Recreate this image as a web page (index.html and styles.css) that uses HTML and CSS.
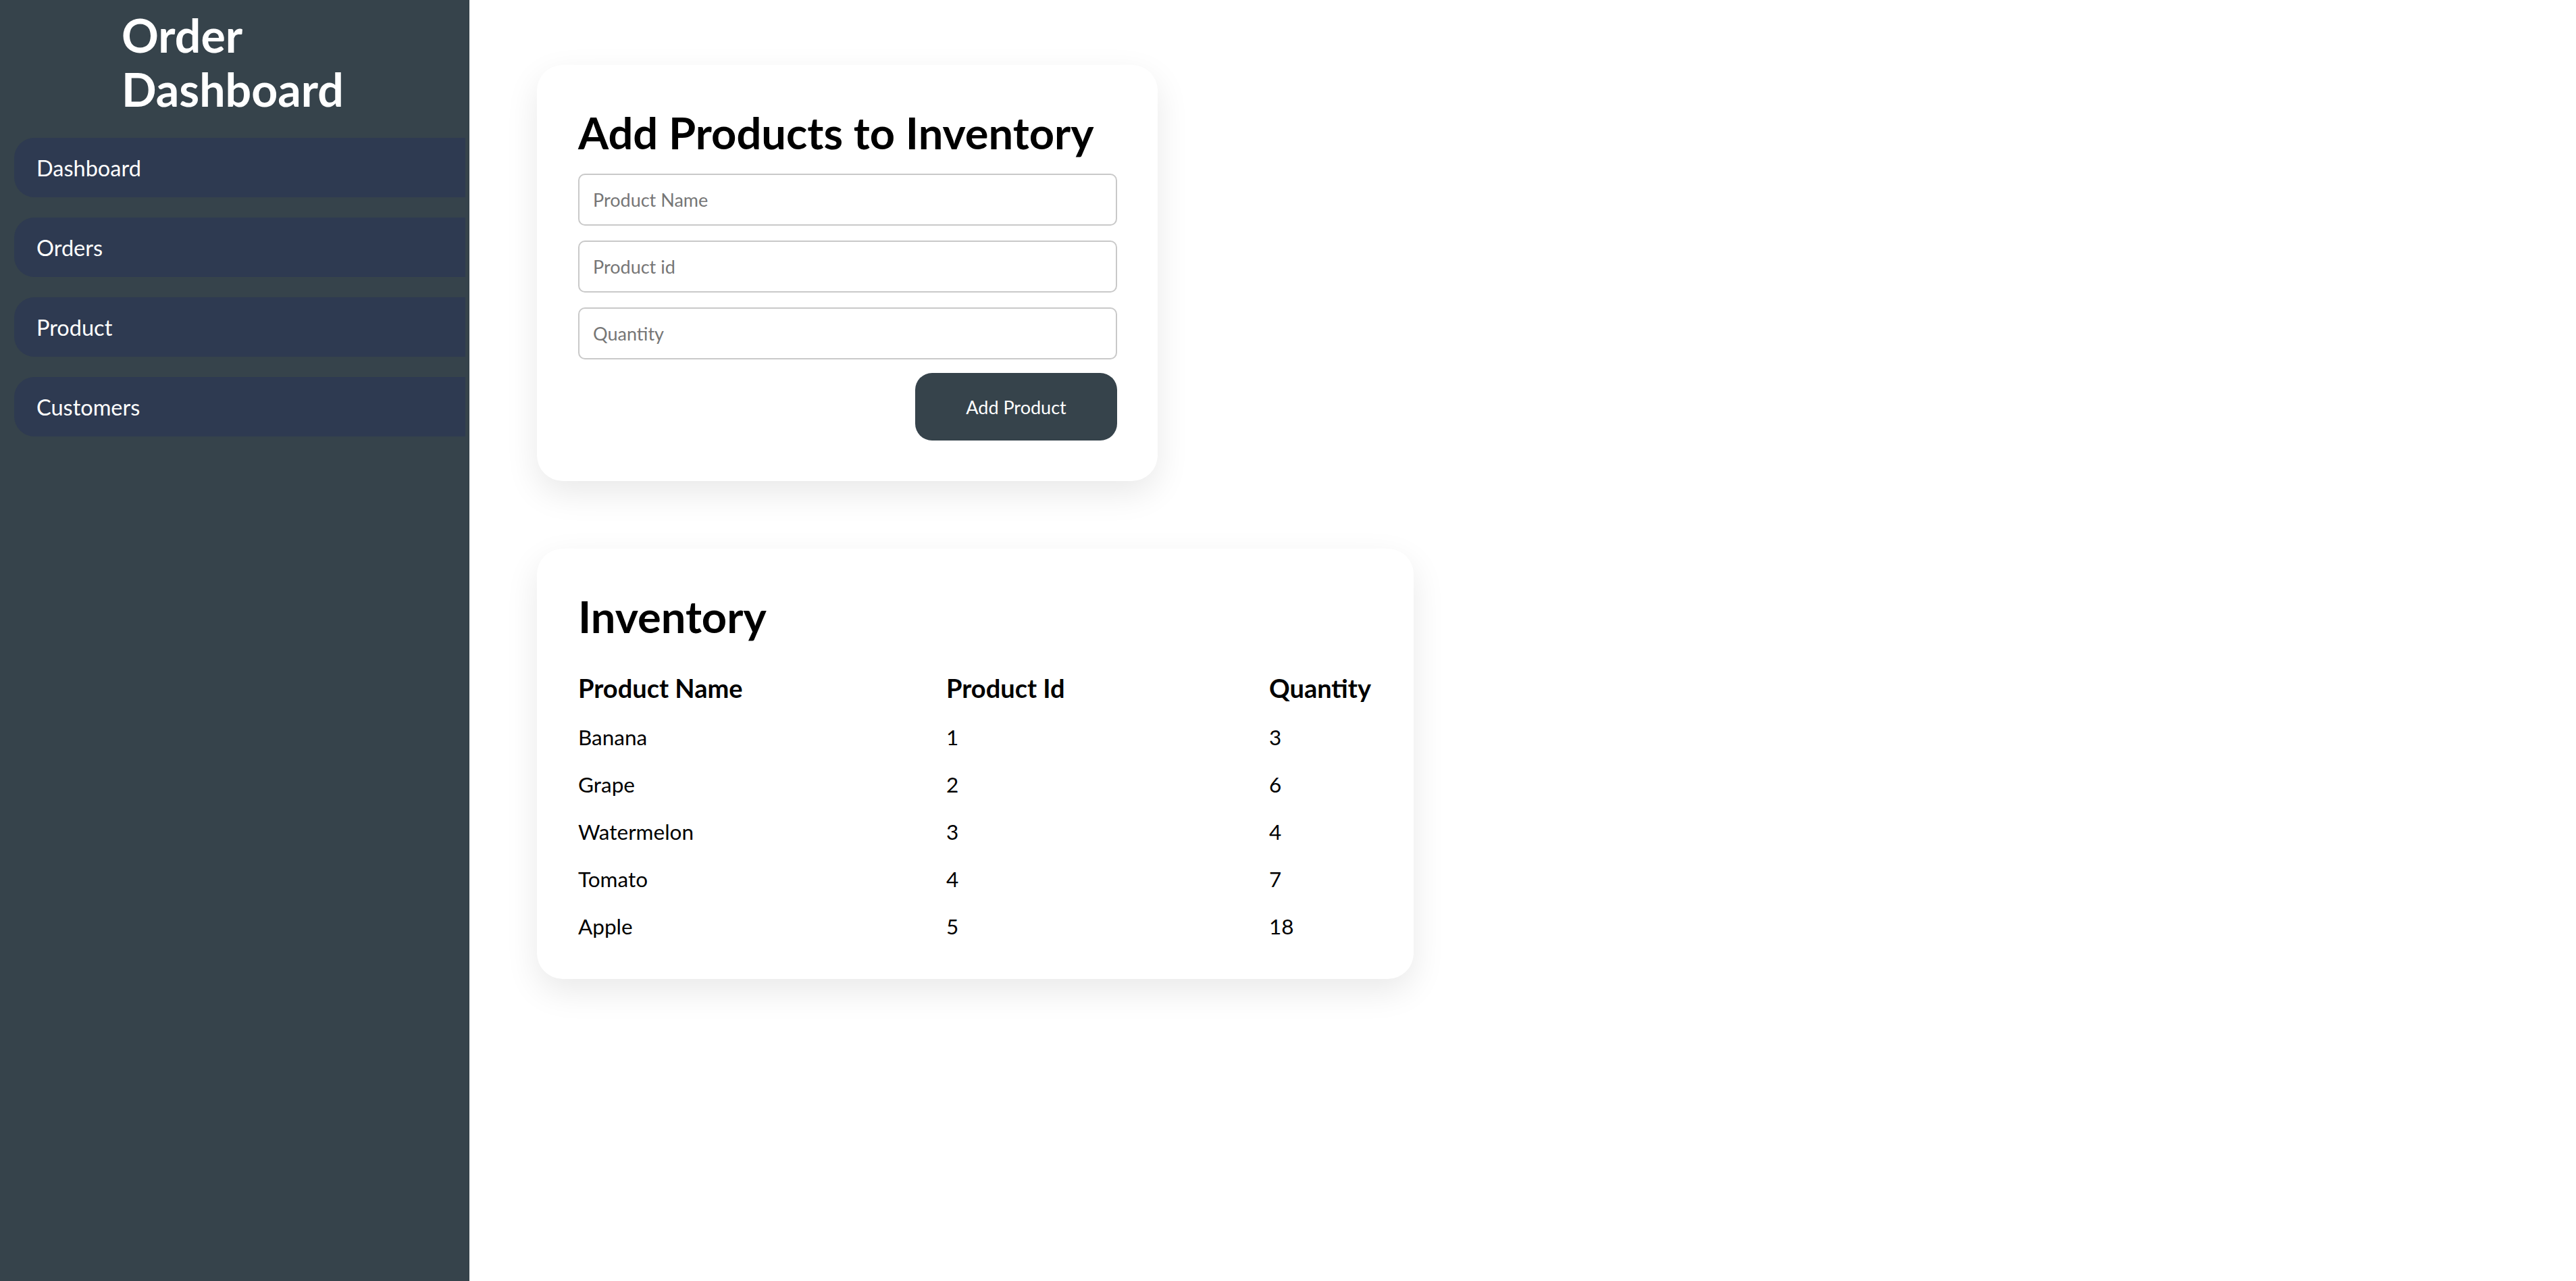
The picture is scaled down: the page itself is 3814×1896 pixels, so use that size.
FILE: index.html
```html
<!DOCTYPE html>
<html lang="en">
<head>
<meta charset="utf-8">
<title>Order Dashboard</title>
<link rel="stylesheet" href="styles.css">
</head>
<body>
<div class="layout">
  <aside class="sidebar">
    <h1 class="brand">Order Dashboard</h1>
    <nav class="nav">
      <a class="nav-item" href="#">Dashboard</a>
      <a class="nav-item" href="#">Orders</a>
      <a class="nav-item" href="#">Product</a>
      <a class="nav-item" href="#">Customers</a>
    </nav>
  </aside>
  <main class="main">
    <section class="card card-form">
      <h2 class="card-title">Add Products to Inventory</h2>
      <form class="form">
        <input class="field" type="text" placeholder="Product Name">
        <input class="field" type="text" placeholder="Product id">
        <input class="field" type="text" placeholder="Quantity">
        <div class="actions">
          <button class="btn" type="button">Add Product</button>
        </div>
      </form>
    </section>
    <section class="card card-table">
      <h2 class="card-title">Inventory</h2>
      <table class="table">
        <thead>
          <tr><th class="c1">Product Name</th><th class="c2">Product Id</th><th class="c3">Quantity</th></tr>
        </thead>
        <tbody>
          <tr><td>Banana</td><td>1</td><td>3</td></tr>
          <tr><td>Grape</td><td>2</td><td>6</td></tr>
          <tr><td>Watermelon</td><td>3</td><td>4</td></tr>
          <tr><td>Tomato</td><td>4</td><td>7</td></tr>
          <tr><td>Apple</td><td>5</td><td>18</td></tr>
        </tbody>
      </table>
    </section>
  </main>
</div>
</body>
</html>
```
FILE: styles.css
```css
* { box-sizing: border-box; }
html, body { margin: 0; padding: 0; }
body {
  font-family: Lato, "Noto Sans", sans-serif;
  background: #ffffff;
  color: #000;
}
.layout {
  display: flex;
  min-height: 1896px;
}
.sidebar {
  width: 695px;
  flex-shrink: 0;
  background: #36434b;
  overflow: hidden;
}
.brand {
  margin: 0;
  padding-left: 180px;
  max-width: 560px;
  color: #fff;
  font-size: 68px;
  line-height: 80px;
  font-weight: 700;
  padding-top: 12px;
  padding-bottom: 32px;
}
.nav {
  display: flex;
  flex-direction: column;
  gap: 30px;
  padding-left: 21px;
  padding-right: 6px;
}
.nav-item {
  display: flex;
  align-items: center;
  height: 88px;
  padding-left: 33px;
  background: #2e3a51;
  border-radius: 30px 0 0 30px;
  color: #fff;
  text-decoration: none;
  font-size: 32.5px;
}
.main {
  padding: 96px 0 0 100px;
  display: flex;
  flex-direction: column;
  align-items: flex-start;
  gap: 100px;
}
.card {
  background: #fff;
  border-radius: 38px;
  box-shadow: 0 18px 50px rgba(0,0,0,0.09);
}
.card-form {
  width: 919px;
  padding: 0 60px 60px 61px;
}
.card-title {
  margin: 0;
  font-size: 65px;
  font-weight: 700;
  line-height: 77px;
}
.card-form .card-title {
  padding-top: 62px;
  padding-bottom: 22px;
}
.form {
  display: flex;
  flex-direction: column;
  gap: 22px;
}
.field {
  width: 798px;
  height: 77px;
  border: 2px solid #c9c9c9;
  border-radius: 10px;
  padding: 0 20px;
  font-family: inherit;
  font-size: 27px;
  color: #000;
  outline: none;
}
.field::placeholder { color: #767676; }
.actions {
  display: flex;
  justify-content: flex-end;
  margin-top: -2px;
}
.btn {
  width: 299px;
  height: 100px;
  border: none;
  border-radius: 25px;
  background: #36434b;
  color: #fff;
  font-family: inherit;
  font-size: 27px;
}
.card-table {
  width: 1298px;
  padding: 62px 60px 43px 61px;
}
.card-table .card-title {
  padding-top: 0;
  padding-bottom: 28px;
}
.table {
  width: 100%;
  border-collapse: collapse;
}
.table th {
  text-align: left;
  font-size: 38px;
  font-weight: 700;
  height: 77px;
  padding: 0;
}
.table td {
  font-size: 31.5px;
  height: 70px;
  padding: 0;
}
.c1 { width: 545px; }
.c2 { width: 478px; }
```
